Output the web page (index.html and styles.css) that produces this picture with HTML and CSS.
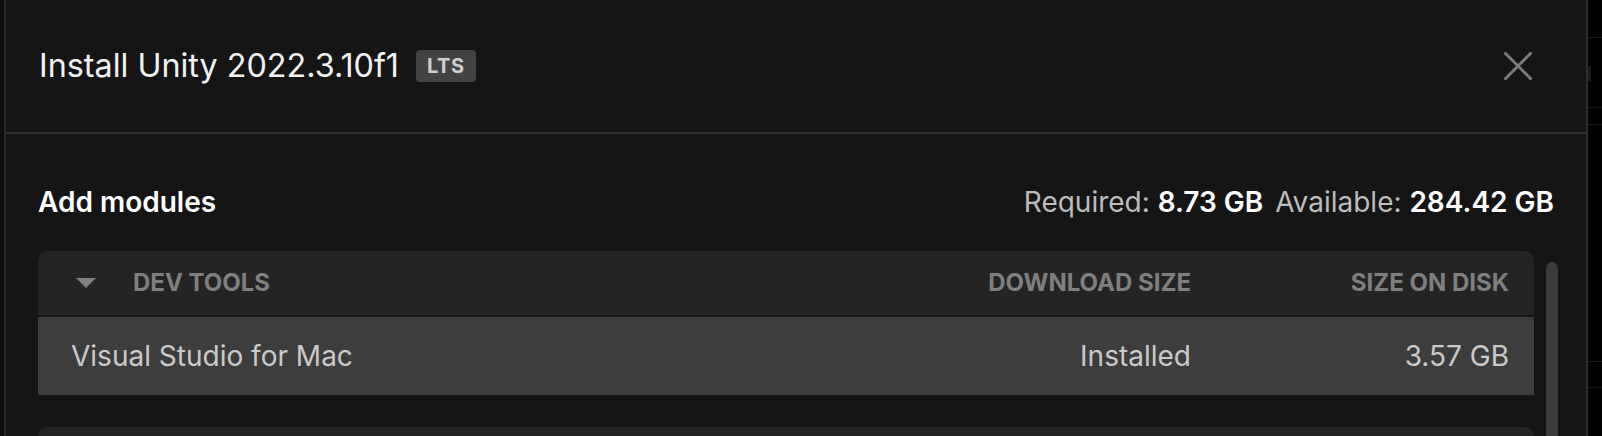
FILE: index.html
```html
<!DOCTYPE html>
<html lang="en">
<head>
<meta charset="utf-8">
<title>Install Unity</title>
<link rel="stylesheet" href="styles.css">
</head>
<body>
<div class="screen">
  <div class="edge-left"></div>
  <div class="dialog">
    <header class="dialog-header">
      <h1 class="title">Install Unity 2022.3.10f1</h1>
      <span class="badge">LTS</span>
      <button class="close" aria-label="Close">
        <svg width="28" height="28" viewBox="0 0 28 28"><path d="M1.5 1.5 L26.5 26.5 M26.5 1.5 L1.5 26.5" stroke="#7b7b7b" stroke-width="3" stroke-linecap="square" fill="none"/></svg>
      </button>
    </header>
    <section class="dialog-body">
      <div class="summary">
        <h2 class="section-title">Add modules</h2>
        <div class="space">
          <span class="label">Required:</span> <span class="value">8.73 GB</span>
          <span class="label gap">Available:</span> <span class="value">284.42 GB</span>
        </div>
      </div>
      <div class="list-area">
        <div class="list">
          <div class="card">
            <div class="card-head">
              <span class="caret"></span>
              <span class="col-name">DEV TOOLS</span>
              <span class="col-dl">DOWNLOAD SIZE</span>
              <span class="col-disk">SIZE ON DISK</span>
            </div>
            <div class="card-row">
              <span class="col-name">Visual Studio for Mac</span>
              <span class="col-dl">Installed</span>
              <span class="col-disk">3.57 GB</span>
            </div>
          </div>
          <div class="card next"></div>
        </div>
        <div class="scrollbar"></div>
      </div>
    </section>
  </div>
  <div class="edge-right"></div>
</div>
</body>
</html>
```

FILE: styles.css
```css
* { box-sizing: border-box; }
html, body { margin: 0; padding: 0; }
body {
  background: #000;
  font-family: "Inter", "Noto Sans", sans-serif;
  overflow: hidden;
}
.screen {
  display: flex;
  width: 1602px;
  height: 436px;
  overflow: hidden;
}
.edge-left {
  width: 4px;
  flex: none;
  background: #0d0d0d;
}
.edge-right {
  width: 14px;
  flex: none;
  background-color: #000;
  background-image:
    linear-gradient(#1a1a1a, #1a1a1a),
    linear-gradient(#1a1a1a, #1a1a1a),
    linear-gradient(#161616, #161616),
    linear-gradient(#1c1c1c, #1c1c1c),
    linear-gradient(#1a1a1a, #1a1a1a),
    linear-gradient(#161616, #161616);
  background-repeat: no-repeat;
  background-size: 14px 1px, 3px 15px, 14px 1px, 14px 1px, 14px 1px, 14px 1px;
  background-position: 0 37px, 0 66px, 0 107px, 0 124px, 0 361px, 0 387px;
}
.dialog {
  width: 1584px;
  flex: none;
  background: #151515;
  border-left: 2px solid #2a2a2a;
  border-right: 2px solid #2e2e2e;
  display: flex;
  flex-direction: column;
}
.dialog-header {
  height: 134px;
  flex: none;
  display: flex;
  align-items: center;
  padding: 0 54px 0 33px;
  border-bottom: 2px solid #2f2f2f;
}
.title {
  margin: 0;
  font-size: 32.3px;
  font-weight: 400;
  color: #f2f2f2;
  line-height: 40px;
  letter-spacing: 0;
}
.badge {
  margin-left: 17px;
  height: 32px;
  padding: 0 11px;
  display: inline-flex;
  align-items: center;
  background: #434343;
  color: #d0d0d0;
  border-radius: 4px;
  font-size: 20px;
  font-weight: 700;
  letter-spacing: 0.6px;
}
.close {
  margin-left: auto;
  width: 28px;
  height: 28px;
  padding: 0;
  border: 0;
  background: none;
  display: flex;
}
.dialog-body {
  flex: 1;
  padding: 51px 28px 0 32px;
  display: flex;
  flex-direction: column;
}
.summary {
  display: flex;
  align-items: center;
  justify-content: space-between;
  height: 34px;
  margin-right: 4px;
}
.section-title {
  margin: 0;
  font-size: 28px;
  font-weight: 600;
  color: #fff;
  line-height: 34px;
}
.space {
  font-size: 28px;
  line-height: 34px;
  white-space: nowrap;
}
.label { color: #bcbcbc; font-weight: 400; }
.label.gap { margin-left: 4px; }
.value { color: #fff; font-weight: 600; }
.list-area {
  margin-top: 32px;
  display: flex;
  gap: 12px;
  flex: 1;
}
.list {
  flex: 1;
  display: flex;
  flex-direction: column;
  gap: 32px;
}
.card {
  background: #242424;
  border-radius: 10px 10px 0 0;
  overflow: hidden;
}
.card.next { height: 40px; }
.card-head {
  height: 66px;
  display: flex;
  align-items: center;
  padding: 0 25px 2px 38px;
  border-bottom: 2px solid #151515;
  font-size: 24px;
  font-weight: 700;
  color: #7f7f7f;
}
.caret {
  width: 0;
  height: 0;
  border-left: 10px solid transparent;
  border-right: 10px solid transparent;
  border-top: 10px solid #808080;
  margin-right: 37px;
  margin-top: 2px;
}
.card-head .col-name { flex: 1; }
.col-dl { width: 300px; text-align: right; }
.col-disk { width: 318px; text-align: right; }
.card-row {
  height: 78px;
  display: flex;
  align-items: center;
  background: #3d3d3d;
  padding: 0 25px 0 33px;
  font-size: 28px;
  color: #cacaca;
}
.card-row .col-name { flex: 1; }
.scrollbar {
  width: 12px;
  margin-top: 11px;
  background: #3b3b3b;
  border-radius: 6px 6px 0 0;
}
```
